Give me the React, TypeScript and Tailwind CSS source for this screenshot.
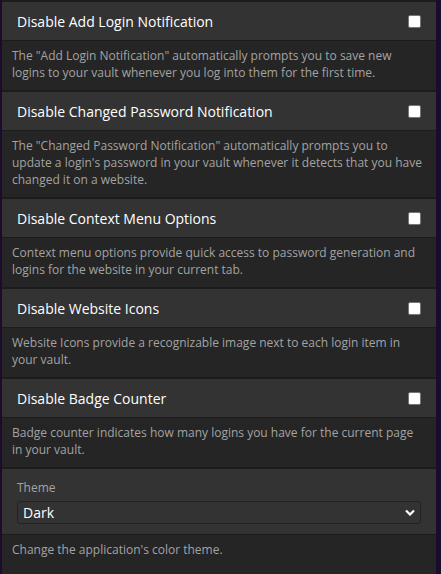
import React from 'react';

const options = [
  {
    title: 'Disable Add Login Notification',
    desc: 'The "Add Login Notification" automatically prompts you to save new logins to your vault whenever you log into them for the first time.',
  },
  {
    title: 'Disable Changed Password Notification',
    desc: 'The "Changed Password Notification" automatically prompts you to update a login\'s password in your vault whenever it detects that you have changed it on a website.',
  },
  {
    title: 'Disable Context Menu Options',
    desc: 'Context menu options provide quick access to password generation and logins for the website in your current tab.',
  },
  {
    title: 'Disable Website Icons',
    desc: 'Website Icons provide a recognizable image next to each login item in your vault.',
  },
  {
    title: 'Disable Badge Counter',
    desc: 'Badge counter indicates how many logins you have for the current page in your vault.',
  },
];

function Checkbox() {
  return <div className="w-[13px] h-[13px] rounded-[2px] bg-white border border-[#767676]" />;
}

export default function App() {
  return (
    <div
      className="h-[574px] overflow-hidden bg-[#1a0c2a] flex"
      style={{ fontFamily: '"Open Sans", sans-serif' }}
    >
      <div className="ml-[2px] w-[434px] border-t-2 border-[#1c1c1c] bg-[#252525] flex flex-col">
        {options.map((o) => (
          <div key={o.title} className="border-b-2 border-[#1c1c1c]">
            <div className="h-[39px] bg-[#333333] border-b border-[#1c1c1c] flex items-center justify-between pl-[15px] pr-[15px]">
              <span className="text-[14px] text-white">{o.title}</span>
              <Checkbox />
            </div>
            <p className="px-[10px] pt-[6px] pb-[9px] text-[12px] leading-[17px] text-[#a3a3a3]">{o.desc}</p>
          </div>
        ))}
        <div className="bg-[#333333] border-b border-[#1c1c1c] px-[15px] pt-[10px] pb-[10px]">
          <div className="text-[12px] leading-[17px] text-[#a3a3a3] mb-[5px]">Theme</div>
          <div className="h-[23px] rounded-[3px] border border-[#222222] bg-[#333333] flex items-center justify-between pl-[5px] pr-[5px]">
            <span className="text-[14px] text-white">Dark</span>
            <svg width="10" height="7" viewBox="0 0 10 7" fill="none">
              <path d="M1 1.5L5 5.5L9 1.5" stroke="white" strokeWidth="2.2" />
            </svg>
          </div>
        </div>
        <p className="px-[10px] pt-[6px] text-[12px] leading-[17px] text-[#a3a3a3]">Change the application's color theme.</p>
      </div>
    </div>
  );
}
